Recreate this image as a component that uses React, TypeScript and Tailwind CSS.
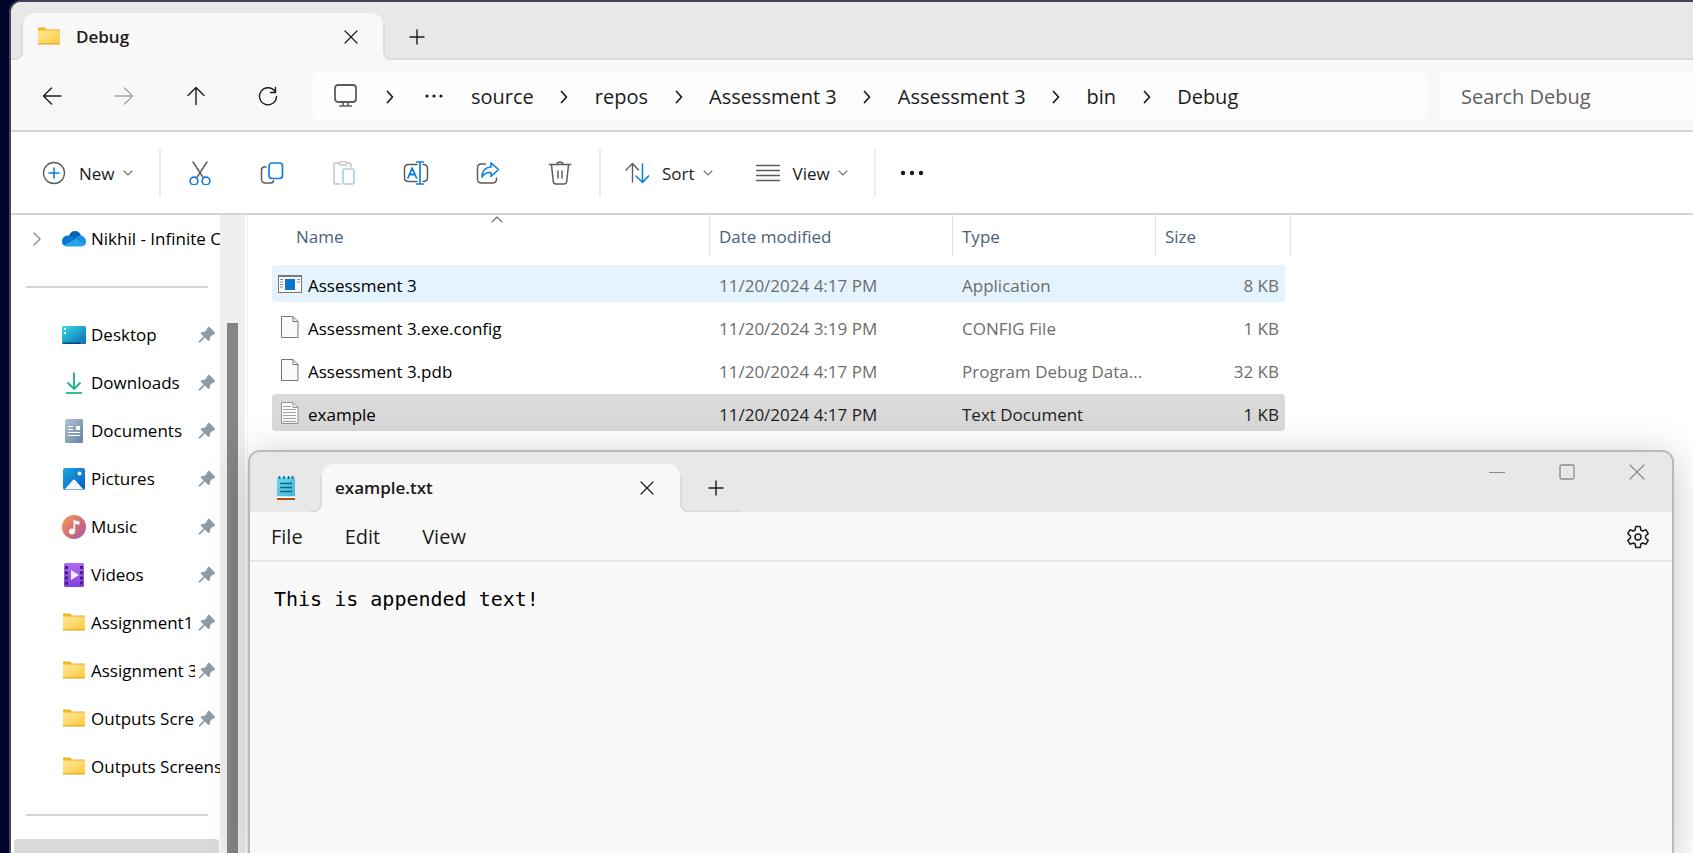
import type { ReactNode } from "react";

const INK = "#1b1b1b";
const GRAY = "#5c5c5c";
const BLUE = "#0f7fdb";

function Svg({ w = 24, h = 24, children }: { w?: number; h?: number; children: ReactNode }) {
  return (
    <svg width={w} height={h} viewBox={`0 0 ${w} ${h}`} fill="none" className="shrink-0" aria-hidden="true">
      {children}
    </svg>
  );
}

const stroke = (color: string, width = 1.5) => ({
  stroke: color,
  strokeWidth: width,
  strokeLinecap: "round" as const,
  strokeLinejoin: "round" as const,
});

const CloseIcon = ({ color = INK, size = 14 }: { color?: string; size?: number }) => (
  <Svg w={size} h={size}>
    <path d={`M1 1 L${size - 1} ${size - 1} M${size - 1} 1 L1 ${size - 1}`} {...stroke(color, 1.2)} />
  </Svg>
);
const PlusIcon = () => (
  <Svg w={16} h={16}>
    <path d="M8 1v14M1 8h14" {...stroke(INK, 1.4)} />
  </Svg>
);
const ArrowIcon = ({ dir }: { dir: "left" | "right" | "up" }) => (
  <Svg w={20} h={20}>
    {dir === "left" && <path d="M19 10H1.5M9.5 2 1.5 10l8 8" {...stroke(INK, 1.4)} />}
    {dir === "right" && <path d="M1 10h17.500M10.500 2l8 8-8 8" {...stroke("#a3a3a3", 1.3)} />}
    {dir === "up" && <path d="M10 18.500V1.500M2 9.500l8-8 8 8" {...stroke(INK, 1.4)} />}
  </Svg>
);
const RefreshIcon = () => (
  <Svg w={20} h={20}>
    <path d="M18.500 10.500A8.500 8.500 0 1 1 16.800 5.200M17.500 1.500v5h-5" {...stroke(INK, 1.4)} />
  </Svg>
);
const MonitorIcon = () => (
  <Svg>
    <rect x="2" y="1" width="21" height="17" rx="3" {...stroke(GRAY, 1.8)} />
    <path d="M10 18.500v3M15 18.500v3M6.500 22h12" {...stroke(GRAY, 1.6)} />
  </Svg>
);
const Crumb = () => (
  <span className="flex w-[61px] shrink-0 justify-center pt-0.5">
    <Svg w={8} h={14}>
      <path d="M1.500 1.500 6.500 7l-5 5.500" {...stroke(INK, 1.7)} />
    </Svg>
  </span>
);
const Dots = ({ r = 1.6, gap = 7 }: { r?: number; gap?: number }) => (
  <Svg w={24} h={6}>
    <circle cx={12 - gap} cy="3" r={r} fill={INK} />
    <circle cx="12" cy="3" r={r} fill={INK} />
    <circle cx={12 + gap} cy="3" r={r} fill={INK} />
  </Svg>
);
const DownIcon = () => (
  <Svg w={10} h={6}>
    <path d="M1 1l4 4 4-4" {...stroke("#777777", 1.1)} />
  </Svg>
);
const NewIcon = () => (
  <Svg>
    <circle cx="12" cy="12" r="10.500" {...stroke(GRAY, 1.3)} />
    <path d="M12 7v10M7 12h10" {...stroke(BLUE, 1.6)} />
  </Svg>
);
const CutIcon = () => (
  <Svg>
    <path d="M5 1l10.500 16M19 1 8.500 17" {...stroke(GRAY, 1.4)} />
    <circle cx="6" cy="20" r="3.900" {...stroke(BLUE, 1.6)} />
    <circle cx="18" cy="20" r="3.900" {...stroke(BLUE, 1.6)} />
  </Svg>
);
const CopyIcon = () => (
  <Svg>
    <path d="M6 6H4.500Q1.500 6 1.500 9v9q0 4 4 4h5q3 0 3-2.500" {...stroke(GRAY, 1.5)} />
    <rect x="9" y="2" width="13.500" height="15.500" rx="3" {...stroke(BLUE, 1.7)} />
  </Svg>
);
const PasteIcon = () => (
  <Svg>
    <path d="M8 23H3.500Q2 23 2 21.500v-18Q2 2 3.500 2H7M15 2h2.500Q19 2 19 3.500V6" {...stroke("#c2c2c2", 1.4)} />
    <rect x="7" y="0.800" width="8" height="3.200" rx="1.500" {...stroke("#c2c2c2", 1.3)} />
    <rect x="11" y="8" width="11" height="15" rx="1.500" {...stroke("#a5d2f5", 1.7)} />
  </Svg>
);
const RenameIcon = () => (
  <Svg w={26} h={24}>
    <path d="M14 3.500H5.500q-4 0-4 4v9q0 4 4 4H14M20 3.500q4.500 0 4.500 4v9q0 4-4.500 4" {...stroke(GRAY, 1.5)} />
    <path d="M5 17 9.200 7l4.300 10M6.500 13.500h5.500" {...stroke(BLUE, 1.8)} />
    <path d="M13.500 1h7M13.500 23h7M17 1v22" {...stroke(BLUE, 1.7)} />
  </Svg>
);
const ShareIcon = () => (
  <Svg>
    <path d="M9.500 3H5.500q-4 0-4 4v11q0 4 4 4h11q4 0 4-4v-1" {...stroke(GRAY, 1.5)} />
    <path d="M15 1.800 22.500 8.500 15 15.500v-4q-6-.5-9 4.500 0-9.500 9-10z" {...stroke(BLUE, 1.6)} />
  </Svg>
);
const TrashIcon = () => (
  <Svg>
    <path d="M1.500 3.500h21M9 3.500Q9.200 1 12 1t3 2.500M3.500 4l1.800 16.500q.3 2.500 2.700 2.500h8q2.400 0 2.700-2.500L20.500 4M10 10v7M14 10v7" {...stroke(GRAY, 1.5)} />
  </Svg>
);
const SortIcon = () => (
  <Svg>
    <path d="M7.500 21V2.500M1 9l6.500-6.500L13.500 9" {...stroke(GRAY, 1.4)} />
    <path d="M17.500 3v18.500M11 15l6.500 6.500L23.500 15" {...stroke(BLUE, 1.6)} />
  </Svg>
);
const LinesIcon = () => (
  <Svg>
    <path d="M.5 4.500h23M.5 9.500h23M.5 14.500h23M.5 19.500h23" {...stroke(GRAY, 1.4)} />
  </Svg>
);
const FolderIcon = () => (
  <Svg>
    <defs>
      <linearGradient id="folder" x1="0" y1="0" x2="1" y2="1">
        <stop offset="0" stopColor="#ffe69b" />
        <stop offset="1" stopColor="#ffcb3d" />
      </linearGradient>
    </defs>
    <path d="M1 7V3.500Q1 2.500 2 2.500h6l1.500 1.500V7z" fill="#f9b51b" />
    <path d="M1 5h22v14H1z" fill="url(#folder)" />
    <path d="M1 3.500h8v2H1z" fill="#f9b51b" />
    <path d="M9 4.500h14v1H8z" fill="#efb12c" />
    <path d="M1 18.200h22v1.300H1z" fill="#e9a81f" />
  </Svg>
);
const CloudIcon = () => (
  <Svg>
    <path d="M7 9Q8.500 4 13 4q4.500 0 6 4.500L12 14z" fill="#0463b5" />
    <path d="M5.500 19.500Q0 19 0 14.500 0 9.500 5 8.500q3-.5 5.500 1.500l6 4L5 19.500z" fill="#0a78d0" />
    <path d="M16.500 9q2-1.300 4 0 3.500 2 3.500 5.500 0 2-1 3.500L12 12.500q1.500-2.500 4.500-3.500z" fill="#1691df" />
    <path d="M2.500 18 12 12.800q1.500-.8 3 0l8.300 4.700q-1.300 2-3.800 2H6q-2.300 0-3.500-1.500z" fill="#28a5ea" />
  </Svg>
);
const DesktopIcon = () => (
  <Svg>
    <defs>
      <linearGradient id="desk" x1="0" y1="0" x2="1" y2="1">
        <stop offset="0" stopColor="#38dcdf" />
        <stop offset="1" stopColor="#0a68bd" />
      </linearGradient>
    </defs>
    <rect y="3" width="24" height="18" rx="1.500" fill="url(#desk)" />
    <path d="M.5 19.500h23V20q0 1-1 1H1.500q-1 0-1-1z" fill="#0b4a78" />
    <path d="M2 5h2v2H2zM2 9h2v2H2z" fill="#fff" />
    <path d="M19 20h1M21.500 20h1" stroke="#bfe6ff" />
  </Svg>
);
const DownloadIcon = () => (
  <Svg>
    <path d="M12 1.500V18M5.500 11.500 12 18l6.500-6.500" stroke="#1caf8f" strokeWidth="1.800" />
    <path d="M4 22h16" stroke="#22b58d" strokeWidth="1.800" />
  </Svg>
);
const DocumentsIcon = () => (
  <Svg>
    <defs>
      <linearGradient id="docs" x1="0" y1="0" x2="1" y2="1">
        <stop offset="0" stopColor="#b1c3d8" />
        <stop offset="1" stopColor="#6781a3" />
      </linearGradient>
    </defs>
    <rect x="3" width="18" height="24" rx="1.500" fill="url(#docs)" />
    <path d="M6 7.500h5M6 10.500h5M6 13.500h12M6 16.500h12" stroke="#fff" strokeWidth="1.200" />
    <path d="M14 7h4v4h-4z" fill="#fff" />
  </Svg>
);
const PicturesIcon = () => (
  <Svg>
    <defs>
      <linearGradient id="pics" x1="0" y1="0" x2="1" y2="1">
        <stop offset="0" stopColor="#1ba4e4" />
        <stop offset="1" stopColor="#0961b8" />
      </linearGradient>
    </defs>
    <rect x="1" y="1" width="22" height="22" rx="2" fill="url(#pics)" />
    <path d="M2.500 22.500l8.500-9.500q1-1 2 0l8.500 9.500z" fill="#f2f8fd" />
    <circle cx="17.500" cy="6.500" r="2" fill="#fff" />
  </Svg>
);
const MusicIcon = () => (
  <Svg>
    <defs>
      <linearGradient id="music" x1="0" y1="0" x2="1" y2="1">
        <stop offset="0.100" stopColor="#f3915a" />
        <stop offset="0.600" stopColor="#cc6a78" />
        <stop offset="1" stopColor="#9e5ec4" />
      </linearGradient>
    </defs>
    <circle cx="12" cy="12" r="12" fill="url(#music)" />
    <circle cx="10" cy="16.500" r="3" fill="#fff" />
    <path d="M11.500 4.500q2 2 6 1.700v3.300q-2.500.2-4.300-.8v7.800h-1.700z" fill="#fff" />
  </Svg>
);
const VideosIcon = () => (
  <Svg>
    <defs>
      <linearGradient id="vids" x1="0" y1="0" x2="0" y2="1">
        <stop offset="0" stopColor="#b06af0" />
        <stop offset="1" stopColor="#8340e0" />
      </linearGradient>
    </defs>
    <rect x="2" width="20" height="24" rx="1.500" fill="url(#vids)" />
    <path d="M4.500 3v19M19.500 3v19" stroke="#41207e" strokeWidth="3" strokeDasharray="3 2.200" />
    <path d="M9 7l8 5-8 5z" fill="#f3eafd" />
  </Svg>
);
const PinIcon = () => (
  <Svg w={18} h={18}>
    <path d="M11.500 1 17 6.500q.5 1.200-1 1.800l-3.200 1.700-1.300 4.500q-.5.900-1.300.3l-3.500-3.400L2 16.500H.8V15.300L5.500 10.500 2.800 7.800Q2.300 6.900 3.200 6.500l4.300-1.200L9.700 1.500q.8-1.300 1.800-.5z" fill="#8f9aa3" />
  </Svg>
);
const AppFileIcon = () => (
  <Svg>
    <rect x=".5" y="3.500" width="23" height="17" fill="#fafafa" stroke="#777" />
    <path d="M0 3h24v2H0z" fill="#777" />
    <path d="M2 7.500h3M2 10h3M2 12.500h3M2 15h3M19 7.500h3M19 10h3" stroke="#8a8a8a" />
    <rect x="7" y="7" width="10" height="11" fill="#0b74cc" />
  </Svg>
);
const BlankFileIcon = ({ lined = false }: { lined?: boolean }) => (
  <Svg>
    <path d="M3.500 1.500h11.500l5 5v16H3.500z" fill="#fafafa" stroke={lined ? "#949494" : "#777"} />
    <path d="M15 1.500v5h5" stroke={lined ? "#949494" : "#777"} />
    {lined && <path d="M5 5.500h8M5 8.500h13M5 11.500h13M5 14.500h13M5 17.500h13M5 20.500h13" stroke="#a3a3a3" />}
  </Svg>
);
const NotepadIcon = () => (
  <Svg w={18} h={24}>
    <defs>
      <linearGradient id="pad" x1="0" y1="0" x2="1" y2="1">
        <stop offset="0" stopColor="#6fd7ee" />
        <stop offset="1" stopColor="#45b4d8" />
      </linearGradient>
    </defs>
    <rect y="1.500" width="18" height="19" rx="1" fill="url(#pad)" />
    <path d="M2.500 0v3M7 0v3M11.500 0v3M15.500 0v3" stroke="#0a6a8c" strokeWidth="1.600" />
    <path d="M3 7.500h12M3 11.500h12M3 15.500h12" stroke="#0a6a8c" strokeWidth="1.700" />
    <path d="M0 20.500h18v1.500H0z" fill="#fff" />
    <path d="M0 22h18v2H0z" fill="#a9520f" />
  </Svg>
);
const GearIcon = () => (
  <Svg>
    <path
      d="M9.800 1.500h4.400l.7 3.500 1.700 1 3.400-1.200 2.200 3.800L19.500 11v2l2.700 2.400-2.200 3.800-3.400-1.200-1.700 1-.7 3.500H9.800L9.100 19l-1.700-1L4 19.200l-2.200-3.800L4.500 13v-2L1.800 8.600 4 4.800 7.400 6l1.700-1z"
      {...stroke(INK, 1.5)}
    />
    <circle cx="12" cy="12" r="3" {...stroke(INK, 1.5)} />
  </Svg>
);

/** Strip segment beside a tab, curving into the tab's foot. */
function Flare({ side, className, children }: { side: "left" | "right"; className: string; children?: ReactNode }) {
  const edge = side === "left" ? "rounded-br-lg border-r-2" : "rounded-bl-lg border-l-2";
  return (
    <div className={`flex flex-col bg-[#f8f8f8] ${className}`}>
      <div className="h-3 bg-[#e8e8e8]" />
      <div className={`flex flex-1 items-center border-b-2 border-[#dcdcdc] bg-[#e8e8e8] pb-2.5 ${edge}`}>{children}</div>
    </div>
  );
}

function Tab({ title, icon, className }: { title: string; icon?: ReactNode; className: string }) {
  return (
    <div className="bg-[linear-gradient(#e8e8e8_50%,#f8f8f8_50%)]">
      <div className={`flex h-full items-center rounded-t-xl bg-[#f8f8f8] ${className}`}>
        {icon}
        <span className="flex-1 text-[17px] font-semibold text-[#1b1b1b]">{title}</span>
        <button aria-label={`Close ${title}`}>
          <CloseIcon />
        </button>
      </div>
    </div>
  );
}

const places: { name: string; icon: ReactNode; pinned: boolean }[] = [
  { name: "Desktop", icon: <DesktopIcon />, pinned: true },
  { name: "Downloads", icon: <DownloadIcon />, pinned: true },
  { name: "Documents", icon: <DocumentsIcon />, pinned: true },
  { name: "Pictures", icon: <PicturesIcon />, pinned: true },
  { name: "Music", icon: <MusicIcon />, pinned: true },
  { name: "Videos", icon: <VideosIcon />, pinned: true },
  { name: "Assignment1", icon: <FolderIcon />, pinned: true },
  { name: "Assignment 3", icon: <FolderIcon />, pinned: true },
  { name: "Outputs Screenshots", icon: <FolderIcon />, pinned: true },
  { name: "Outputs Screenshots", icon: <FolderIcon />, pinned: false },
];

const files = [
  { name: "Assessment 3", date: "11/20/2024 4:17 PM", type: "Application", size: "8 KB", icon: <AppFileIcon />, bg: "bg-[#e5f3fe]", text: "text-[#6d6d6d]" },
  { name: "Assessment 3.exe.config", date: "11/20/2024 3:19 PM", type: "CONFIG File", size: "1 KB", icon: <BlankFileIcon />, bg: "", text: "text-[#6d6d6d]" },
  { name: "Assessment 3.pdb", date: "11/20/2024 4:17 PM", type: "Program Debug Data...", size: "32 KB", icon: <BlankFileIcon />, bg: "", text: "text-[#6d6d6d]" },
  { name: "example", date: "11/20/2024 4:17 PM", type: "Text Document", size: "1 KB", icon: <BlankFileIcon lined />, bg: "bg-[#d9d9d9]", text: "text-[#1f1f1f]" },
];

const crumbs = ["source", "repos", "Assessment 3", "Assessment 3", "bin", "Debug"];

const tools = [
  { label: "Cut", icon: <CutIcon /> },
  { label: "Copy", icon: <CopyIcon /> },
  { label: "Paste", icon: <PasteIcon /> },
  { label: "Rename", icon: <RenameIcon /> },
  { label: "Share", icon: <ShareIcon /> },
  { label: "Delete", icon: <TrashIcon /> },
];

const Divider = () => <div className="h-12 w-0.5 shrink-0 bg-[#ececec]" />;

function MenuButton({ icon, label }: { icon: ReactNode; label: string }) {
  return (
    <button className="flex items-center">
      {icon}
      <span className="mr-2 ml-[13px] pt-0.5 text-[17px]">{label}</span>
      <DownIcon />
    </button>
  );
}

function Sidebar() {
  return (
    <nav className="flex w-[209px] shrink-0 flex-col overflow-hidden text-[17px] text-black">
      <div className="flex h-12 shrink-0 items-center pl-[22px]">
        <Svg w={8} h={14}>
          <path d="M1 1l6 6-6 6" {...stroke("#8a8a8a", 1.4)} />
        </Svg>
        <a href="#onedrive" className="ml-[21px] flex min-w-0 flex-1 items-center">
          <CloudIcon />
          <span className="ml-[5px] overflow-hidden whitespace-nowrap">Nikhil - Infinite Computer</span>
        </a>
      </div>
      <div className="my-[23px] mr-3 ml-[15px] h-0.5 shrink-0 bg-[#d4d4d4]" />
      <div className="flex shrink-0 flex-col">
        {places.map((place, i) => (
          <a key={i} href="#place" className="flex h-12 items-center pl-[51px]">
            {place.icon}
            <span className="ml-[5px] flex-1 overflow-hidden whitespace-nowrap">{place.name}</span>
            {place.pinned && (
              <span className="mr-1 ml-[3px]">
                <PinIcon />
              </span>
            )}
          </a>
        ))}
      </div>
      <div className="my-[23px] mr-3 ml-[15px] h-0.5 shrink-0 bg-[#d4d4d4]" />
      <div className="mr-px ml-[3px] h-12 shrink-0 rounded-t-sm bg-[#d9d9d9]" />
    </nav>
  );
}

function FileTable() {
  const head = "h-[41px] p-0 pb-[9px] text-left font-normal";
  return (
    <table className="w-[1043px] table-fixed border-separate border-spacing-0 text-[17px]">
      <colgroup>
        <col className="w-[462px]" />
        <col className="w-[243px]" />
        <col className="w-[203px]" />
        <col className="w-[135px]" />
      </colgroup>
      <thead className="text-[#4c607a]">
        <tr>
          <th className={head}>
            <div className="relative flex h-[41px] items-center border-r border-[#e2e2e2] pt-0.5 pl-12">
              Name
              <span className="absolute top-px left-1/2 ml-3">
                <Svg w={12} h={7}>
                  <path d="M1 6l5-5 5 5" {...stroke("#6b6b6b", 1.1)} />
                </Svg>
              </span>
            </div>
          </th>
          {["Date modified", "Type", "Size"].map((label) => (
            <th key={label} className={head}>
              <div className="flex h-[41px] items-center border-r border-[#e2e2e2] pt-0.5 pl-[9px]">{label}</div>
            </th>
          ))}
        </tr>
      </thead>
      <tbody>
        {files.map((file) => (
          <tr key={file.name} className={file.text}>
            <td className="p-0 pb-1.5 pl-6">
              <div className={`flex h-[37px] items-center rounded-l-sm pl-1.5 ${file.bg}`}>
                {file.icon}
                <span className="ml-1.5 pt-1 text-black">{file.name}</span>
              </div>
            </td>
            <td className="p-0 pb-1.5">
              <div className={`flex h-[37px] items-center pt-1 pl-[9px] ${file.bg}`}>{file.date}</div>
            </td>
            <td className="p-0 pb-1.5">
              <div className={`flex h-[37px] items-center pt-1 pl-[9px] whitespace-nowrap ${file.bg}`}>{file.type}</div>
            </td>
            <td className="p-0 pr-1.5 pb-1.5">
              <div className={`flex h-[37px] items-center justify-end rounded-r-sm pt-1 pr-1.5 ${file.bg}`}>{file.size}</div>
            </td>
          </tr>
        ))}
      </tbody>
    </table>
  );
}

function Notepad() {
  return (
    <section className="absolute top-[235px] right-[19px] -bottom-3 left-0 z-10 flex flex-col overflow-hidden rounded-xl border-2 border-[#b9b9b9] bg-[#f9f9f9] shadow-[0_6px_40px_rgba(0,0,0,0.22)]">
      <header className="flex h-[60px] shrink-0 bg-[#e8e8e8] pt-3">
        <div className="flex w-[60px] items-center pl-[27px]">
          <NotepadIcon />
        </div>
        <Flare side="left" className="w-3" />
        <Tab title="example.txt" className="w-[358px] pr-[26px] pl-[13px]" />
        <Flare side="right" className="w-[61px]">
          <button aria-label="New tab" className="pl-[26px]">
            <PlusIcon />
          </button>
        </Flare>
        <div className="flex flex-1 justify-end gap-[54px] pr-[27px]">
          <button aria-label="Minimize" className="h-4">
            <Svg w={16} h={16}>
              <path d="M.5 8.500h15" {...stroke("#8a8a8a", 1.2)} />
            </Svg>
          </button>
          <button aria-label="Maximize" className="h-4">
            <Svg w={16} h={16}>
              <rect x="1" y="1" width="14" height="14" rx="1.500" {...stroke("#8a8a8a", 1.3)} />
            </Svg>
          </button>
          <button aria-label="Close window" className="h-4">
            <CloseIcon color="#8a8a8a" size={16} />
          </button>
        </div>
      </header>
      <div className="flex h-[50px] shrink-0 items-center border-b-2 border-[#e7e7e7] bg-[#f8f8f8] pt-0.5 pr-[22px] pl-[21px] text-xl text-[#1b1b1b]">
        <button className="mr-[42px]">File</button>
        <button className="mr-[42px]">Edit</button>
        <button>View</button>
        <button aria-label="Settings" className="ml-auto">
          <GearIcon />
        </button>
      </div>
      <textarea
        aria-label="Text editor"
        defaultValue="This is appended text!"
        className="w-full flex-1 resize-none bg-transparent px-6 py-[23px] font-['DejaVu_Sans_Mono',monospace] text-xl leading-7 text-black outline-none"
      />
    </section>
  );
}

export default function App() {
  return (
    <div className="h-screen overflow-hidden bg-[#00052c] pl-[9px] font-['Open_Sans',sans-serif] text-[#1b1b1b]">
      <div className="flex h-full flex-col overflow-hidden rounded-tl-xl border-t-2 border-l-2 border-[#45455a] bg-white">
        <header className="flex h-[58px] shrink-0 bg-[#e8e8e8] pt-[11px]">
          <Flare side="left" className="w-3" />
          <Tab
            title="Debug"
            icon={
              <span className="mr-[15px]">
                <FolderIcon />
              </span>
            }
            className="w-[360px] pr-[25px] pl-3.5"
          />
          <Flare side="right" className="flex-1">
            <button aria-label="New tab" className="pl-6">
              <PlusIcon />
            </button>
          </Flare>
        </header>

        <div className="flex h-[72px] shrink-0 items-center border-b-2 border-[#d4d4d4] bg-[#f8f8f8] pt-0.5 pl-[5px] text-xl">
          <button aria-label="Back" className="flex w-[72px] justify-center">
            <ArrowIcon dir="left" />
          </button>
          <button aria-label="Forward" className="flex w-[72px] justify-center">
            <ArrowIcon dir="right" />
          </button>
          <button aria-label="Up" className="flex w-[72px] justify-center">
            <ArrowIcon dir="up" />
          </button>
          <button aria-label="Refresh" className="flex w-[72px] justify-center">
            <RefreshIcon />
          </button>
          <div className="ml-[9px] flex h-12 flex-1 items-center rounded-md bg-[#fdfdfd] pl-5">
            <button aria-label="This PC" className="mr-0.5">
              <MonitorIcon />
            </button>
            <Crumb />
            <button aria-label="More locations" className="mr-[25px] ml-0.5">
              <Dots r={1.6} gap={7} />
            </button>
            {crumbs.map((crumb, i) => (
              <span key={i} className="flex items-center">
                {i > 0 && <Crumb />}
                <a href="#folder" className="pt-0.5">
                  {crumb}
                </a>
              </span>
            ))}
          </div>
          <input
            type="search"
            aria-label="Search Debug"
            placeholder="Search Debug"
            className="ml-3 h-12 w-[254px] rounded-l-md bg-[#fdfdfd] pl-[22px] outline-none placeholder:text-[#5f5f5f]"
          />
        </div>

        <div className="flex h-[83px] shrink-0 items-center border-b-2 border-[#d4d4d4] bg-white pl-[31px]">
          <div className="w-[117px]">
            <MenuButton icon={<NewIcon />} label="New" />
          </div>
          <Divider />
          <div className="mr-[3px] ml-[3px] flex">
            {tools.map((tool) => (
              <button key={tool.label} aria-label={tool.label} className="flex w-[72px] justify-center">
                {tool.icon}
              </button>
            ))}
          </div>
          <Divider />
          <div className="flex w-[273px] gap-[43px] pl-6">
            <MenuButton icon={<SortIcon />} label="Sort" />
            <MenuButton icon={<LinesIcon />} label="View" />
          </div>
          <Divider />
          <button aria-label="See more" className="ml-6">
            <Dots r={2.2} gap={9} />
          </button>
        </div>

        <div className="flex min-h-0 flex-1">
          <Sidebar />
          <div className="flex w-[25px] shrink-0 justify-center bg-[#efefef] pt-[108px]">
            <div className="w-[11px] bg-[#858585]" />
          </div>
          <main className="relative ml-0.5 min-w-0 flex-1 border-l border-[#f3f3f3]">
            <FileTable />
            <Notepad />
          </main>
        </div>
      </div>
    </div>
  );
}
